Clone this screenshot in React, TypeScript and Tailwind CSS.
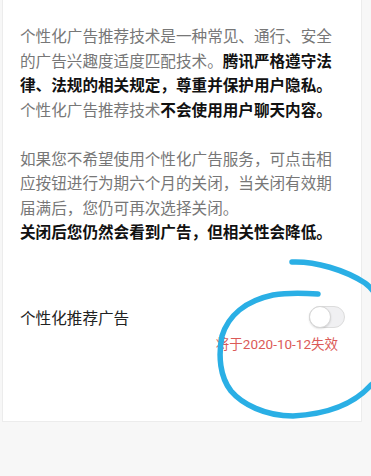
import React from "react";

export default function App() {
  const font = "\"Noto Sans CJK SC\", \"Noto Sans\", sans-serif";
  return (
    <div className="relative w-[371px] h-[476px] bg-[#f7f7f7] overflow-hidden" style={{ fontFamily: font }}>
      <div className="ml-[2px] w-[360px] h-[422px] bg-white border-x border-b border-[#ececec] pt-[23px] pl-[17px]">
        <div className="w-[322px] text-[15.6px] leading-[24.5px] text-[#777]">
          <p>
            个性化广告推荐技术是一种常见、通行、安全的广告兴趣度适度匹配技术。
            <span className="font-bold text-[#111]">腾讯严格遵守法律、法规的相关规定，尊重并保护用户隐私。</span>
            个性化广告推荐技术<span className="font-bold text-[#111]">不会使用用户聊天内容。</span>
          </p>
          <p className="mt-[24.5px]">
            如果您不希望使用个性化广告服务，可点击相应按钮进行为期六个月的关闭，当关闭有效期届满后，您仍可再次选择关闭。
            <br />
            <span className="font-bold text-[#111]">关闭后您仍然会看到广告，但相关性会降低。</span>
          </p>
        </div>
        <div className="mt-[61px] pr-[16px] flex items-center justify-between">
          <span className="text-[15.6px] leading-[24px] text-[#222]">个性化推荐广告</span>
          <div className="relative w-[36px] h-[22px] rounded-full bg-[#f0f0f2] border border-[#dcdcdc]">
            <div className="absolute left-[-1px] top-[-1px] w-[22px] h-[22px] rounded-full bg-white border border-[#d6d6d6] shadow-[0_1px_2px_rgba(0,0,0,0.12)]" />
          </div>
        </div>
        <div className="mt-[6px] pr-[23px] text-right text-[13.5px] leading-[18px] text-[#db5a58]" style={{ fontFamily: "Roboto, \"Noto Sans CJK SC\", sans-serif" }}>
          将于2020-10-12失效
        </div>
      </div>
      <svg className="absolute inset-0 pointer-events-none" width="371" height="476" viewBox="0 0 371 476">
        <path
          d="M292,262 C315,261 345,270 365,283 C395,305 392,370 371,385 C355,403 330,414 293,416 C265,416 242,404 231,391 C220,377 218,356 222,336 C228,316 245,301 273,295 C290,292 305,293 318,294"
          fill="none"
          stroke="#2aafe5"
          strokeWidth="5.5"
          strokeLinecap="round"
          strokeLinejoin="round"
        />
      </svg>
    </div>
  );
}
